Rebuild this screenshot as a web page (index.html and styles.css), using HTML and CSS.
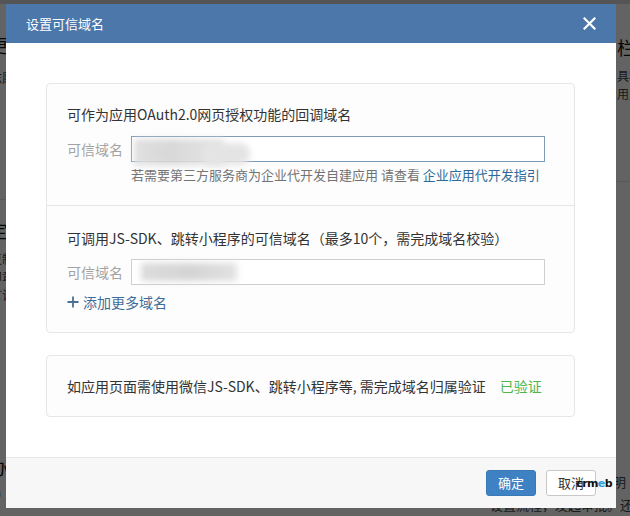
FILE: index.html
```html
<!DOCTYPE html>
<html lang="zh-CN">
<head>
<meta charset="utf-8">
<title>设置可信域名</title>
<link rel="stylesheet" href="styles.css">
</head>
<body>
<div class="page">
  <div class="page-top"></div>
  <div class="page-cols">
    <div class="col-left">
      <div class="bg-card c1"><div class="bg-title">更新日志</div><div class="bg-line">志愿者管理</div></div>
      <div class="bg-card c2"><div class="bg-title">定制</div><div class="bg-line">复制</div><div class="bg-line">印章</div><div class="bg-line">言论</div></div>
      <div class="bg-card c3"><div class="bg-title">办公</div><div class="bg-line">m</div></div>
    </div>
    <div class="col-right">
      <div class="bg-card r1"><div class="bg-title">栏目</div><div class="bg-line">具栏</div><div class="bg-line">用户</div></div>
      <div class="bg-card r2"><div class="bg-line lr">主明</div><div class="bg-line">设置流程，发起审批。还能让</div></div>
    </div>
  </div>
</div>
<div class="mask"></div>

<div class="modal">
  <div class="modal-header">
    <span class="modal-title">设置可信域名</span>
    <span class="close" aria-label="关闭">
      <svg width="13" height="13" viewBox="0 0 13 13"><path d="M1.5 1.5 L11.5 11.5 M11.5 1.5 L1.5 11.5" stroke="#fff" stroke-width="2.2" stroke-linecap="square" fill="none"/></svg>
    </span>
  </div>
  <div class="modal-body">
    <div class="panel">
      <div class="panel-sec sec-a">
        <div class="sec-title">可作为应用OAuth2.0网页授权功能的回调域名</div>
        <div class="field">
          <span class="field-label">可信域名</span>
          <div class="input focus"><div class="blur b1"></div><div class="blur b1b"></div></div>
        </div>
        <div class="help">若需要第三方服务商为企业代开发自建应用 请查看 <span class="link">企业应用代开发指引</span></div>
      </div>
      <div class="panel-sec sec-b">
        <div class="sec-title">可调用JS-SDK、跳转小程序的可信域名（最多10个，需完成域名校验）</div>
        <div class="field">
          <span class="field-label">可信域名</span>
          <div class="input"><div class="blur b2"></div></div>
        </div>
        <div class="add-more">
          <svg width="12" height="12" viewBox="0 0 12 12"><path d="M6 0.5 V11.5 M0.5 6 H11.5" stroke="#4a6f93" stroke-width="1.8" fill="none"/></svg>
          <span>添加更多域名</span>
        </div>
      </div>
    </div>
    <div class="panel verify">
      <span>如应用页面需使用微信JS-SDK、跳转小程序等, 需完成域名归属验证</span>
      <span class="ok">已验证</span>
    </div>
  </div>
  <div class="modal-footer">
    <span class="btn primary">确定</span>
    <span class="btn">取消</span>
    <span class="wm">cr<b>m</b><i>e</i>b</span>
  </div>
</div>
</body>
</html>
```
FILE: styles.css
```css
html, body {
  margin: 0;
  padding: 0;
  width: 630px;
  height: 516px;
  overflow: hidden;
  font-family: "Noto Sans CJK SC", "Noto Sans", sans-serif;
  color: #333;
}

/* underlying page */
.page {
  width: 630px;
  height: 516px;
  background: #fff;
  display: flex;
  flex-direction: column;
}
.page-top {
  height: 4px;
  background: #dcdcdc;
}
.page-cols {
  flex: 1;
  display: grid;
  grid-template-columns: 1fr 140px;
}
.col-left {
  margin-left: -10px;
  display: flex;
  flex-direction: column;
}
.bg-card {
  white-space: nowrap;
}
.bg-title {
  font-size: 18px;
  line-height: 24px;
  color: #111;
}
.bg-line {
  font-size: 12px;
  line-height: 18px;
  color: #444;
}
.c1 { height: 196px; padding-top: 29px; box-sizing: border-box; border-bottom: 1px solid #e4e4e4; }
.c1 .bg-line { margin-top: 12px; }
.c2 { height: 240px; padding-top: 18px; box-sizing: border-box; }
.c2 .bg-title { margin-bottom: 8px; }
.c3 { padding-top: 15px; }
.c3 .bg-line { margin-top: 4px; }
.r1 {
  height: 178px;
  padding: 31px 0 0 127px;
  box-sizing: border-box;
  border-bottom: 1px solid #e4e4e4;
}
.r1 .bg-title { margin-bottom: 8px; }
.r2 {
  margin-top: 288px;
}
.r2 .lr { padding-left: 110px; }
.r2 .bg-line { line-height: 23px; font-size: 13px; }

.mask {
  position: fixed;
  inset: 0;
  background: rgba(0, 0, 0, 0.61);
}

/* modal */
.modal {
  position: fixed;
  left: 6px;
  top: 4px;
  width: 610px;
  height: 504px;
  background: #fff;
  display: flex;
  flex-direction: column;
}
.modal-header {
  height: 39px;
  flex: none;
  background: #4b77aa;
  display: flex;
  align-items: center;
  justify-content: space-between;
  padding: 0 20px;
}
.modal-title {
  color: #fff;
  font-size: 13px;
  line-height: 20px;
}
.close {
  display: flex;
  width: 13px;
  height: 13px;
}
.modal-body {
  flex: 1;
  padding: 40px 41px 40px 40px;
  display: flex;
  flex-direction: column;
  gap: 22px;
}
.panel {
  border: 1px solid #e6e6e6;
  border-radius: 4px;
  background: #fdfdfd;
}
.panel-sec {
  padding-left: 20px;
  padding-right: 29px;
}
.sec-a {
  padding-top: 20px;
  padding-bottom: 21px;
  border-bottom: 1px solid #e6e6e6;
}
.sec-b {
  padding-top: 22px;
  padding-bottom: 20px;
}
.sec-title {
  font-size: 14px;
  line-height: 20px;
  color: #333;
  white-space: nowrap;
}
.field {
  display: flex;
  align-items: center;
  gap: 8px;
  margin-top: 12px;
}
.sec-b .field { margin-top: 11px; }
.field-label {
  width: 56px;
  font-size: 14px;
  line-height: 26px;
  color: #a3a3a3;
  white-space: nowrap;
}
.input {
  flex: 1;
  height: 26px;
  box-sizing: border-box;
  border: 1px solid #cfcfcf;
  background: #fff;
  position: relative;
}
.input.focus {
  border-color: #7e9bb6;
}
.blur {
  position: absolute;
  filter: blur(3px);
}
.b1 {
  left: 2px;
  top: 2px;
  width: 90px;
  height: 26px;
  background: linear-gradient(90deg, #e0e0e0 0%, #d8d8d8 40%, #e6e6e6 100%);
}
.b1b {
  left: 70px;
  top: 6px;
  width: 48px;
  height: 22px;
  border-radius: 10px;
  background: #e4e4e4;
}
.b2 {
  left: 9px;
  top: 3px;
  width: 96px;
  height: 18px;
  background: linear-gradient(90deg, #dcdcdc 0%, #d4d4d4 50%, #e2e2e2 100%);
}
.help {
  margin-top: 4px;
  margin-left: 64px;
  font-size: 13px;
  line-height: 18px;
  color: #737373;
  white-space: nowrap;
}
.link {
  color: #2d6a9a;
}
.add-more {
  margin-top: 7px;
  display: flex;
  align-items: center;
  gap: 4px;
  font-size: 14px;
  line-height: 20px;
  color: #3d6c9a;
}
.verify {
  padding: 20px 20px 20px 20px;
  font-size: 14px;
  line-height: 20px;
  display: flex;
  gap: 14px;
  white-space: nowrap;
}
.ok {
  color: #4cb54c;
}
.modal-footer {
  height: 51px;
  flex: none;
  box-sizing: border-box;
  border-top: 1px solid #e6e6e6;
  background: #f7f7f7;
  padding: 12px 20px 0 20px;
  display: flex;
  justify-content: flex-end;
  align-items: flex-start;
  gap: 10px;
  position: relative;
}
.btn {
  width: 50px;
  height: 26px;
  box-sizing: border-box;
  border: 1px solid #c8c8c8;
  border-radius: 3px;
  background: #fff;
  font-size: 13px;
  line-height: 24px;
  text-align: center;
  color: #333;
}
.btn.primary {
  background: #3f82c4;
  border-color: #3a79b8;
  color: #fff;
}
.wm {
  position: absolute;
  right: 4px;
  top: 19px;
  font-family: "DejaVu Sans", sans-serif;
  font-size: 11px;
  font-weight: bold;
  letter-spacing: -0.6px;
  color: #111;
  line-height: 14px;
}
.wm b { font-weight: bold; }
.wm i { font-style: normal; color: #2a9de0; }
```
